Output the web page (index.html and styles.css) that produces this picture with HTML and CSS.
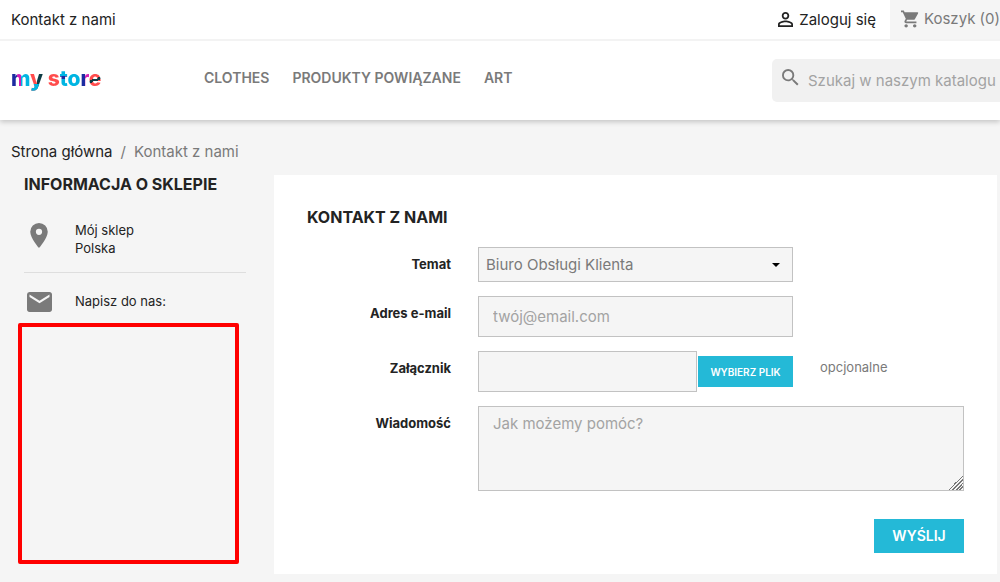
FILE: index.html
```html
<!DOCTYPE html>
<html lang="pl">
<head>
<meta charset="utf-8">
<meta name="viewport" content="width=device-width, initial-scale=1">
<title>Kontakt z nami</title>
<link rel="stylesheet" href="styles.css">
</head>
<body>
<header class="header">
  <div class="topbar">
    <a class="topbar-contact" href="#">Kontakt z nami</a>
    <a class="login" href="#">
      <svg class="icon-user" viewBox="4 4 16 16" aria-hidden="true"><path d="M12 5.900a2.100 2.100 0 1 1 0 4.200 2.100 2.100 0 0 1 0-4.200m0 9c2.970 0 6.100 1.460 6.100 2.100v1.100H5.900V17c0-.64 3.130-2.100 6.100-2.100M12 4C9.790 4 8 5.790 8 8s1.790 4 4 4 4-1.790 4-4-1.790-4-4-4zm0 9c-2.670 0-8 1.340-8 4v3h16v-3c0-2.660-5.330-4-8-4z"/></svg>
      <span>Zaloguj się</span>
    </a>
    <a class="cart" href="#">
      <svg class="icon-cart" viewBox="1 2 21 20" aria-hidden="true"><path d="M7 18c-1.100 0-1.990.9-1.990 2S5.900 22 7 22s2-.9 2-2-.9-2-2-2zM1 2v2h2l3.600 7.590-1.350 2.450c-.16.28-.25.61-.25.96 0 1.100.9 2 2 2h12v-2H7.420c-.14 0-.25-.11-.25-.25l.03-.12.900-1.630h7.450c.75 0 1.410-.41 1.750-1.030l3.580-6.490A1 1 0 0 0 20 4H5.210l-.94-2H1zm16 16c-1.100 0-1.990.9-1.990 2s.89 2 1.990 2 2-.9 2-2-.9-2-2-2z"/></svg>
      <span>Koszyk (0)</span>
    </a>
  </div>
  <div class="navbar">
    <a class="logo" href="#" aria-label="my store"><span class="l-m">m</span><span class="l-y">y</span> <span class="l-s">s</span><span class="l-t">t</span><span class="l-o">o</span><span class="l-r">r</span><span class="l-e">e</span></a>
    <nav class="menu">
      <a href="#">CLOTHES</a>
      <a href="#">PRODUKTY POWIĄZANE</a>
      <a href="#">ART</a>
    </nav>
    <form class="search">
      <svg class="icon-search" viewBox="3 3 18 18" aria-hidden="true"><path d="M15.500 14h-.79l-.28-.27A6.470 6.470 0 0 0 16 9.500 6.500 6.500 0 1 0 9.500 16c1.610 0 3.090-.59 4.230-1.570l.27.28v.79l5 4.990L20.490 19l-4.990-5zm-6 0a4.500 4.500 0 1 1 0-9 4.500 4.500 0 0 1 0 9z"/></svg>
      <input type="text" placeholder="Szukaj w naszym katalogu" aria-label="Szukaj">
    </form>
  </div>
</header>

<nav class="breadcrumb" aria-label="Okruszki"><a href="#">Strona główna</a><span class="sep">/</span><span>Kontakt z nami</span></nav>

<div class="columns">
  <aside class="sidebar">
    <h2 class="title">INFORMACJA O SKLEPIE</h2>
    <div class="info address">
      <svg class="icon-place" viewBox="5 2 14 20" aria-hidden="true"><path d="M12 2a7 7 0 0 0-7 7c0 5.250 7 13 7 13s7-7.750 7-13a7 7 0 0 0-7-7zm0 9.500a2.500 2.500 0 1 1 0-5 2.500 2.500 0 0 1 0 5z"/></svg>
      <p>Mój sklep<br>Polska</p>
    </div>
    <div class="info mail">
      <svg class="icon-mail" viewBox="2 4 20 16" aria-hidden="true"><path d="M20 4H4a2 2 0 0 0-1.990 2L2 18c0 1.100.9 2 2 2h16c1.100 0 2-.9 2-2V6c0-1.100-.9-2-2-2zm0 4-8 5-8-5V6l8 5 8-5v2z"/></svg>
      <p>Napisz do nas:</p>
    </div>
    <div class="frame"></div>
  </aside>

  <main class="card">
    <h1 class="title">KONTAKT Z NAMI</h1>
    <form class="contact">
      <label for="subject">Temat</label>
      <select id="subject" class="field"><option>Biuro Obsługi Klienta</option></select>

      <label for="email">Adres e-mail</label>
      <input id="email" class="field tall" type="email" placeholder="twój@email.com">

      <label for="file">Załącznik</label>
      <div class="upload">
        <input id="file" class="field tall" type="text">
        <button class="btn btn-small" type="button">WYBIERZ PLIK</button>
      </div>
      <span class="optional">opcjonalne</span>

      <label for="message">Wiadomość</label>
      <textarea id="message" class="field message" placeholder="Jak możemy pomóc?"></textarea>
    </form>
    <div class="actions"><button class="btn btn-send" type="button">WYŚLIJ</button></div>
  </main>
</div>
</body>
</html>
```
FILE: styles.css
```css
* { box-sizing: border-box; }

body {
  margin: 0;
  background: #f5f5f5;
  color: #232323;
  font: 15px/20px Inter, "Noto Sans", sans-serif;
}

a { color: inherit; text-decoration: none; }
h1, h2, p { margin: 0; }
svg { fill: currentColor; flex: none; }
input, select, textarea, button { font: inherit; border-radius: 0; }

.header {
  background: #fff;
  box-shadow: 0 2px 5px rgba(0, 0, 0, 0.2);
}

.topbar {
  display: flex;
  height: 41px;
  border-bottom: 2px solid #f3f3f3;
  padding-left: 11px;
  align-items: center;
}
.topbar-contact { margin-right: auto; }
.login { display: flex; align-items: center; gap: 6px; padding-right: 14px; }
.icon-user { width: 15px; height: 15px; }
.cart {
  display: flex;
  align-items: center;
  align-self: stretch;
  gap: 5px;
  padding-left: 11px;
  padding-bottom: 2px;
  background: #f5f5f5;
  color: #7a7a7a;
}
.icon-cart { width: 18px; height: 18px; }

.navbar { display: flex; align-items: center; height: 79px; padding-left: 11px; }
.logo {
  width: 193px;
  padding-bottom: 4px;
  font-size: 21px;
  line-height: 32px;
  font-weight: 800;
}
.logo span { background-clip: text; -webkit-background-clip: text; color: transparent; }
.l-m { background-image: linear-gradient(90deg, #1c2ba0 30%, #d41db4 30%, #d41db4 52%, #00b5e2 52%); }
.l-y { background-image: linear-gradient(0deg, #00b5e2 28%, transparent 28%), linear-gradient(90deg, #ff4c4c 55%, #0d3c45 55%); }
.l-s { background-image: linear-gradient(#ff4c4c, #ff4c4c); }
.l-t { background-image: linear-gradient(180deg, #00b5e2 42%, #1c2ba0 42%, #1c2ba0 52%, #00b5e2 52%); }
.l-o { background-image: linear-gradient(#00b5e2, #00b5e2); }
.l-r { background-image: linear-gradient(90deg, #1c2ba0 45%, #d41db4 45%); }
.l-e { background-image: linear-gradient(160deg, #ff4c4c 50%, #0d3c45 50%, #0d3c45 60%, #ff4c4c 60%); }

.menu {
  display: flex;
  gap: 23px;
  margin-right: auto;
  padding-bottom: 6px;
  color: #7a7a7a;
  font-size: 14px;
  font-weight: 600;
}

.search {
  display: flex;
  align-items: center;
  width: 228px;
  height: 43px;
  padding-left: 10px;
  gap: 9px;
  background: #f1f1f1;
  border-radius: 5px 0 0 5px;
  color: #7a7a7a;
}
.icon-search { width: 17px; height: 17px; margin-bottom: 6px; }
.search input { flex: 1; min-width: 0; padding: 0; border: 0; background: none; outline: 0; }
::placeholder { color: #a3a3a3; opacity: 1; }

.breadcrumb { display: flex; gap: 8px; padding: 22px 11px 0; color: #7a7a7a; }
.breadcrumb a { color: #232323; }

.columns {
  display: grid;
  grid-template-columns: 274px 1fr;
  align-items: start;
  padding: 13px 3px 8px 0;
}

.title { font-size: 16px; line-height: 20px; font-weight: 700; }

.sidebar { padding: 0 28px 0 24px; font-size: 13px; line-height: 18px; }
.sidebar .title { margin-top: -1px; }
.info { display: grid; grid-template-columns: 30px 1fr; column-gap: 21px; justify-items: start; }
.info svg { justify-self: center; color: #7a7a7a; }
.address { padding: 27px 0 15px; border-bottom: 1px solid #dedede; }
.icon-place { width: 18px; height: 25px; margin-top: 2px; }
.mail { padding-top: 19px; }
.icon-mail { width: 25px; height: 20px; }
.frame { height: 241px; margin: 11px 7px 0 -6px; border: 4px solid #f00; border-radius: 2px; }

.card { padding: 32px 33px 21px; background: #fff; }
.contact {
  display: grid;
  grid-template-columns: 144px 315px 1fr;
  column-gap: 27px;
  row-gap: 14px;
  margin-top: 20px;
}
.contact label { grid-column: 1; padding-top: 7px; text-align: right; font-size: 13px; font-weight: 700; }
.field {
  display: block;
  width: 100%;
  height: 35px;
  padding: 0 14px;
  border: 1px solid #c2c2c2;
  background: #f5f5f5;
  color: #7a7a7a;
}
select.field {
  grid-column: 2;
  padding: 0 7px;
  appearance: none;
  background: #f5f5f5 url("data:image/svg+xml,%3Csvg xmlns='http://www.w3.org/2000/svg' viewBox='0 0 8 4'%3E%3Cpath d='M0 0h8L4 4z'/%3E%3C/svg%3E") no-repeat right 12px center / 8px 4px;
}
.field.tall { height: 41px; }
.upload { display: flex; align-items: center; gap: 1px; }
.upload .field { flex: 1; min-width: 0; }
.optional { padding-top: 6px; font-size: 13px; color: #7a7a7a; }
.field.message { grid-column: 2 / 4; height: 85px; padding-top: 7px; resize: vertical; }
.message::-webkit-resizer {
  background: linear-gradient(135deg, transparent 50%, #777 50%, #777 56%, transparent 56%, transparent 62%, #777 62%, #777 68%, transparent 68%, transparent 74%, #777 74%, #777 80%, transparent 80%, transparent 86%, #777 86%, #777 92%, transparent 92%);
}

.btn { border: 0; background: #24b9d7; color: #fff; font-weight: 600; cursor: pointer; }
.btn-small { width: 95px; height: 31px; padding: 0; font-size: 10px; }
.btn-send { width: 90px; height: 34px; padding: 0; font-size: 14px; }
.actions { display: flex; justify-content: flex-end; margin-top: 28px; }
```
